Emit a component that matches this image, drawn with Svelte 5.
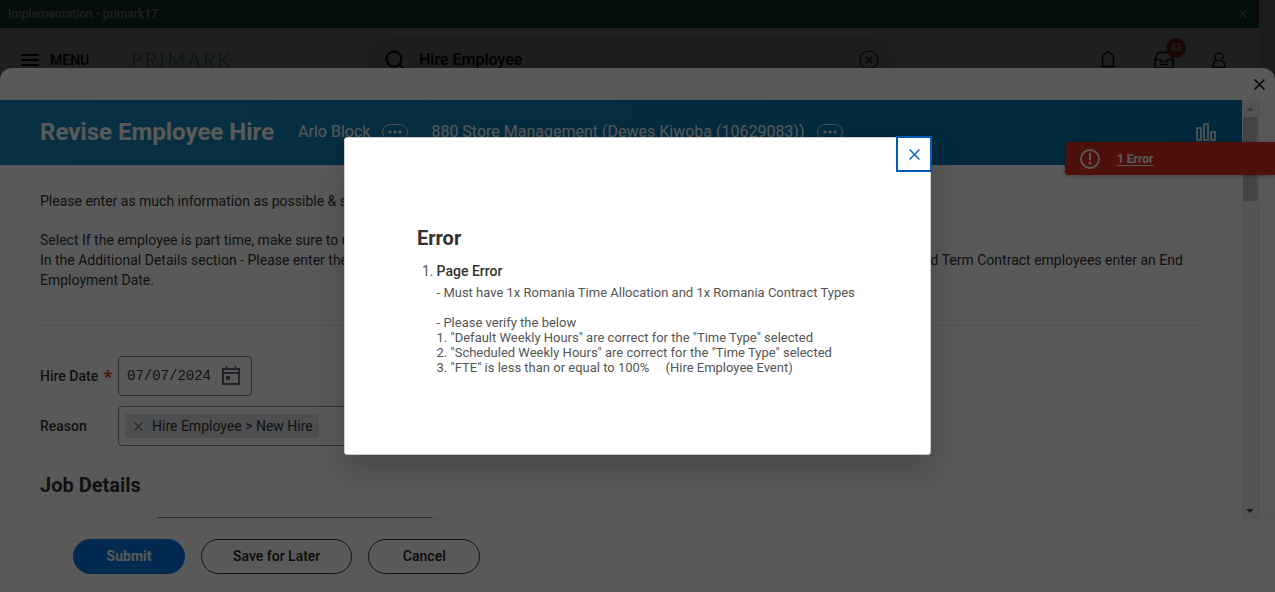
<script>
  let hireDate = $state('07/07/2024');
  let search = $state('Hire Employee');
  const checks = [
    '1. "Default Weekly Hours" are correct for the "Time Type" selected',
    '2. "Scheduled Weekly Hours" are correct for the "Time Type" selected',
    '3. "FTE" is less than or equal to 100%\u00a0\u00a0\u00a0\u00a0 (Hire Employee Event)'
  ];
</script>

{#snippet cross(size, width)}
  <svg width={size} height={size} viewBox="0 0 10 10" fill="none" stroke="currentColor" stroke-width={width} aria-hidden="true">
    <path d="M.5.5l9 9M9.5.5l-9 9" />
  </svg>
{/snippet}

{#snippet related(label)}
  <button class="related" aria-label={label}>
    <svg width="16" height="4" viewBox="0 0 16 4" fill="currentColor" aria-hidden="true">
      <circle cx="3" cy="2" r="1.6" /><circle cx="8" cy="2" r="1.6" /><circle cx="13" cy="2" r="1.6" />
    </svg>
  </button>
{/snippet}

<div class="shell">
  <div class="site">
    <div class="banner">
      <span>Implementation - primark17</span>
      <button class="plain" aria-label="Dismiss banner">{@render cross(8, 1.4)}</button>
    </div>
    <header class="top">
      <button class="plain menu">
        <svg width="18" height="12" viewBox="0 0 18 12" aria-hidden="true"><path d="M0 1h18M0 6h18M0 11h18" stroke="currentColor" stroke-width="2" /></svg>
        MENU
      </button>
      <div class="brand">PRIMARK</div>
      <div class="search">
        <svg width="20" height="20" viewBox="0 0 20 20" fill="none" stroke="currentColor" stroke-width="2" aria-hidden="true"><circle cx="9" cy="9" r="7.6" /><path d="M14.4 14.4L19 19" /></svg>
        <input aria-label="Search" bind:value={search} />
        <button class="plain clear" aria-label="Clear search">
          <svg width="20" height="20" viewBox="0 0 20 20" fill="none" stroke="currentColor" stroke-width="1.6" aria-hidden="true"><circle cx="10" cy="10" r="9" /><path d="M6.8 6.8l6.4 6.4M13.2 6.8l-6.4 6.4" /></svg>
        </button>
      </div>
      <nav class="tools">
        <button class="plain" aria-label="Notifications">
          <svg width="16" height="20" viewBox="0 0 16 20" fill="none" stroke="currentColor" stroke-width="1.5" aria-hidden="true"><path d="M8 0v2.5M.5 16.5h15M2.6 16.5V8a5.4 5.4 0 0 1 10.8 0v8.5M5.5 17v2h5v-2" /></svg>
        </button>
        <button class="plain inbox" aria-label="Inbox">
          <svg width="20" height="18" viewBox="0 0 20 18" fill="none" stroke="currentColor" stroke-width="1.5" aria-hidden="true"><path d="M1 8L4 1.5h12L19 8v9H1zM1 8.5h5.5v2h7v-2H19M6 13.5h8" /></svg>
          <span class="count">43</span>
        </button>
        <button class="plain" aria-label="Profile">
          <svg width="14" height="16" viewBox="0 0 14 16" fill="none" stroke="currentColor" stroke-width="1.5" aria-hidden="true"><circle cx="7" cy="5" r="4" /><path d="M4 8.5C1.8 10 1 12 1 15.2h12C13 12 12.2 10 10 8.5" /></svg>
        </button>
      </nav>
    </header>
  </div>

  <div class="shade"></div>

  <section class="sheet">
    <div class="strip">
      <button class="plain" aria-label="Close task">{@render cross(11, 1.4)}</button>
    </div>
    <div class="work">
      <main class="pane">
        <header class="title">
          <h1>Revise Employee Hire</h1>
          <span class="who">Arlo Block</span>
          {@render related('Related actions for Arlo Block')}
          <span class="who org">880 Store Management (Dewes Kiwoba (10629083))</span>
          {@render related('Related actions for the organisation')}
          <button class="plain chart" aria-label="View chart">
            <svg width="20" height="18" viewBox="0 0 20 18" fill="none" stroke="currentColor" stroke-width="1.6" aria-hidden="true"><path d="M1 5h4v12H1zM8 1h4v16H8zM15 9h4v8h-4z" /></svg>
          </button>
        </header>
        <div class="body">
          <p>Please enter as much information as possible &amp; select the relevant options below.</p>
          <p>
            Select If the employee is part time, make sure to update the scheduled weekly hours.<br />
            In the Additional Details section - Please enter the contract type and the start date for all of the new employees that are listed there. For any Fixed Term Contract employees enter an End Employment Date.
          </p>
          <hr />
          <div class="field">
            <label for="hire-date">Hire Date <b>*</b></label>
            <div class="box date">
              <input id="hire-date" bind:value={hireDate} />
              <svg width="18" height="20" viewBox="0 0 18 20" fill="none" stroke="currentColor" stroke-width="2" aria-hidden="true"><path d="M1 3h16v15H1zM1 7h16M4.5 0v3M13.5 0v3" /><path d="M4 10h4v4H4z" fill="currentColor" stroke="none" /></svg>
            </div>
          </div>
          <div class="field">
            <label for="reason">Reason</label>
            <div class="box reason">
              <button class="chip" id="reason">{@render cross(9, 1.3)}Hire Employee &gt; New Hire</button>
            </div>
          </div>
          <h2>Job Details</h2>
          <div class="box next"></div>
        </div>
      </main>
      <div class="track">
        <i class="up"></i>
        <div class="thumb"></div>
        <i class="down"></i>
      </div>
      <div class="gutter"></div>
    </div>
    <footer class="actions">
      <button class="pill primary">Submit</button>
      <button class="pill">Save for Later</button>
      <button class="pill">Cancel</button>
    </footer>
    <div class="toast">
      <svg width="20" height="20" viewBox="0 0 20 20" fill="none" stroke="currentColor" stroke-width="1.8" aria-hidden="true"><circle cx="10" cy="10" r="9" /><path d="M10 4v7.5M10 13v2.4" stroke-width="2.2" /></svg>
      <a href="#error-title">1 Error</a>
    </div>
  </section>

  <div class="shade center">
    <div class="modal" role="dialog" aria-labelledby="error-title">
      <button class="close" aria-label="Close">{@render cross(11, 1.3)}</button>
      <h2 id="error-title">Error</h2>
      <div class="issue">
        <span class="num">1.</span>
        <div>
          <h3>Page Error</h3>
          <p>- Must have 1x Romania Time Allocation and 1x Romania Contract Types</p>
          <p>- Please verify the below{#each checks as check}<br />{check}{/each}</p>
        </div>
      </div>
    </div>
  </div>
</div>

<style>
  :global(body) { margin: 0; }
  .shell, .shell :global(*) { box-sizing: border-box; }
  .shell {
    position: relative;
    height: 100vh;
    overflow: hidden;
    background: #fff;
    color: #333;
    font: 14px/20px Roboto, sans-serif;
  }
  button, input { font: inherit; color: inherit; }
  h1, h2, h3, p { margin: 0; }
  svg { display: block; flex: none; }
  .plain { display: flex; align-items: center; padding: 0; border: 0; background: none; }

  .site { height: 100%; border-right: 16px solid #e4e4e4; }
  .banner {
    display: flex; align-items: center; justify-content: space-between;
    height: 28px; padding: 0 12px 0 8px;
    background: #297a49; color: #fff; font-size: 12px; font-weight: 500;
  }
  .top { display: flex; align-items: center; height: 64px; padding: 0 33px 0 21px; color: #000; }
  .menu { gap: 11px; width: 95px; height: 64px; border-right: 1px solid #ddd; font-weight: 500; }
  .brand { width: 250px; padding-left: 15px; color: #0097b8; font: 300 19px/24px Lato, sans-serif; letter-spacing: 3px; }
  .search {
    display: flex; align-items: center; gap: 14px;
    width: 529px; height: 48px; padding: 0 15px 0 18px;
    border: 1px solid #eaeaea; border-radius: 24px; background: #f2f2f2;
  }
  .search input { flex: 1; min-width: 0; padding: 0; border: 0; background: none; font-size: 16px; font-weight: 500; }
  .clear { color: #444; }
  .tools { display: flex; align-items: center; gap: 38px; margin-left: auto; color: #111; }
  .inbox { position: relative; }
  .count {
    position: absolute; left: 12px; top: -13px; width: 20px; height: 20px;
    border-radius: 10px; background: #de2e21; color: #fff; font-size: 10px; font-weight: 700; text-align: center;
  }

  .shade { position: absolute; inset: 0; background: rgba(0, 0, 0, .65); }
  .center { display: flex; align-items: center; justify-content: center; }

  .sheet {
    position: absolute; inset: 68px 0 0; display: flex; flex-direction: column;
    overflow: hidden; border-radius: 12px 12px 0 0; background: #fff;
  }
  .strip { display: flex; justify-content: flex-end; height: 32px; flex: none; padding: 0 10px; color: #000; }
  .work { display: flex; flex: 1; min-height: 0; }
  .pane { flex: 1; min-width: 0; overflow: hidden; }
  .title {
    display: flex; align-items: center; height: 65px; padding: 0 26px 1px 40px;
    background: linear-gradient(100deg, #178abd, #0075ad); color: #fff;
  }
  h1 { margin-right: 24px; font-size: 24px; line-height: 32px; font-weight: 700; }
  .who { font-size: 16px; }
  .org { margin-left: 23px; }
  .related {
    display: flex; align-items: center; justify-content: center; width: 26px; height: 16px;
    margin-left: 12px; padding: 0; border: 1px solid #ddd; border-radius: 8px; background: none;
  }
  .chart { margin-left: auto; }
  .body { padding: 26px 40px 0; }
  .body p { margin-bottom: 19px; }
  hr { margin: 35px 0 30px; border: 0; border-top: 1px solid #e8e8e8; }
  .field { display: grid; grid-template-columns: 78px 1fr; align-items: center; margin-bottom: 10px; }
  label { font-weight: 500; }
  label b { margin-left: 2px; color: #de2e21; font-size: 18px; line-height: 16px; vertical-align: -2px; }
  .box { display: flex; align-items: center; height: 40px; border: 1px solid #7b858f; border-radius: 4px; }
  .date { width: 134px; padding: 0 11px 0 8px; justify-content: space-between; color: #5e6a75; }
  .date input { width: 90px; padding: 0; border: 0; background: none; color: #333; font-family: "Liberation Mono", monospace; }
  .reason { width: 280px; padding: 0 6px; }
  .chip {
    display: flex; align-items: center; gap: 9px; height: 24px; padding: 0 6px 0 9px;
    border: 0; border-radius: 2px; background: #dfe2e6; color: #333;
  }
  .chip :global(svg) { color: #5e6a75; }
  .body h2 { margin: 27px 0 20px; font-size: 20px; line-height: 24px; font-weight: 700; }
  .next { width: 280px; margin-left: 115px; }

  .track {
    display: flex; flex-direction: column; align-items: center;
    width: 17px; background: #f1f1f1; border-right: 1px solid #ddd;
  }
  .track i { border: 4px solid transparent; }
  .track .up { margin: 3px 0 6px; border-bottom-color: #a3a3a3; }
  .thumb { width: 14px; height: 84px; background: #c1c1c1; }
  .track .down { margin: auto 0 1px; border-top-color: #505050; }
  .gutter { width: 16px; background: #fafafa; }

  .actions { display: flex; align-items: center; gap: 16px; height: 74px; flex: none; margin-left: 33px; padding: 1px 40px 0; border-top: 1px solid #eee; }
  .pill {
    min-width: 112px; height: 35px; padding: 0 31px; border: 1px solid #333; border-radius: 18px;
    background: #fff; font-weight: 500; color: #222;
  }
  .pill.primary { border-color: #0875e1; background: #0875e1; color: #fff; font-weight: 700; }
  .toast {
    position: absolute; right: 0; top: 74px; display: flex; align-items: center; gap: 17px;
    width: 210px; height: 33px; padding-left: 15px; border-radius: 3px 0 0 3px;
    background: #de2e21; color: #fff; box-shadow: 0 1px 4px rgba(0, 0, 0, .3);
  }
  .toast a { color: #fff; font-size: 12px; font-weight: 700; text-underline-offset: 2px; }

  .modal {
    position: relative; width: 587px; padding: 88px 72px 64px;
    border: 1px solid #ccc; border-radius: 3px; background: #fff;
    box-shadow: 0 16px 32px rgba(0, 0, 0, .2);
  }
  .close {
    position: absolute; right: -2px; top: -2px; display: flex; align-items: center; justify-content: center;
    width: 36px; height: 36px; padding: 0; border: 2px solid #005cb9; background: #fff; color: #005cb9;
  }
  .modal h2 { margin-bottom: 11px; font-size: 20px; line-height: 24px; font-weight: 700; }
  .issue { display: flex; gap: 3px; padding-left: 5px; }
  .num { color: #555; }
  h3 { margin-bottom: 4px; font-size: 14px; line-height: 20px; font-weight: 500; }
  .modal p { margin-bottom: 15px; color: #555; font-size: 13px; line-height: 15px; white-space: nowrap; }
</style>
